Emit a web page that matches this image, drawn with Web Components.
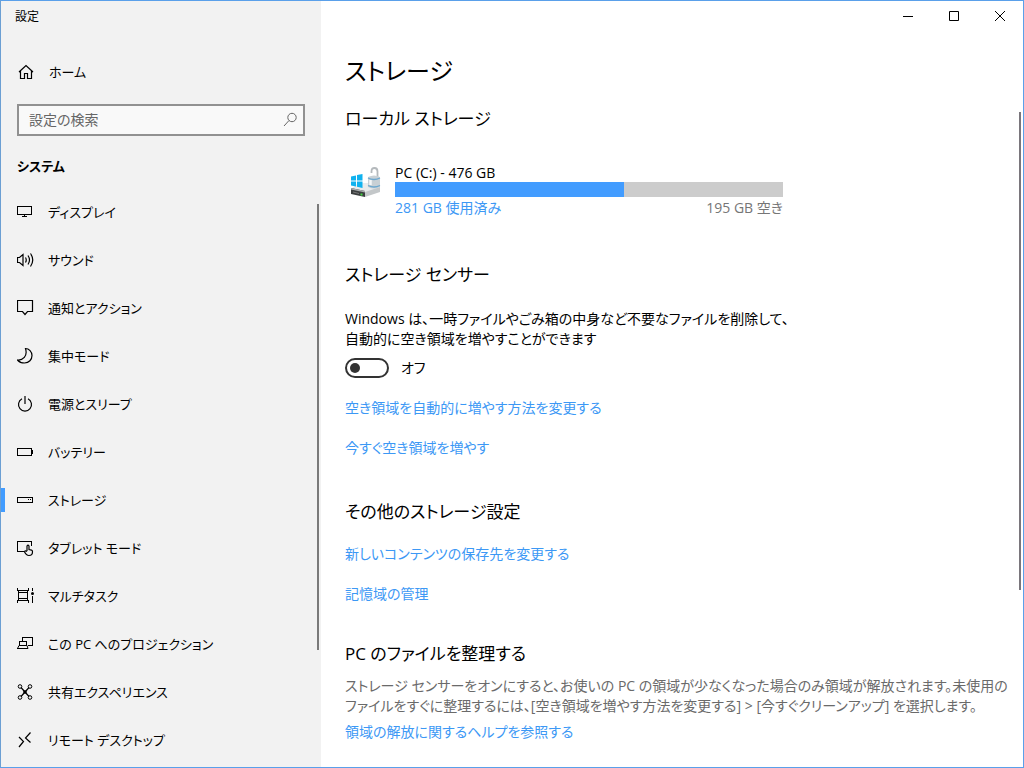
<!DOCTYPE html>
<html lang="ja">
<head>
<meta charset="utf-8">
<meta name="viewport" content="width=device-width, initial-scale=1">
<title>設定</title>
<style>
  :root {
    --accent: #429cff;
    --link: #3c98f5;
  }
  body {
    margin: 0;
    font: 14px/20px "Open Sans", "Noto Sans CJK JP", sans-serif;
    font-feature-settings: "palt";
    color: #000;
  }
</style>
</head>
<body>
<settings-window>
  <settings-sidebar slot="side" heading="システム">
    <nav-item icon="display">ディスプレイ</nav-item>
    <nav-item icon="sound">サウンド</nav-item>
    <nav-item icon="notify">通知とアクション</nav-item>
    <nav-item icon="moon">集中モード</nav-item>
    <nav-item icon="power">電源とスリープ</nav-item>
    <nav-item icon="battery">バッテリー</nav-item>
    <nav-item icon="storage" current>ストレージ</nav-item>
    <nav-item icon="tablet">タブレット モード</nav-item>
    <nav-item icon="multitask">マルチタスク</nav-item>
    <nav-item icon="project">この PC へのプロジェクション</nav-item>
    <nav-item icon="share">共有エクスペリエンス</nav-item>
    <nav-item icon="remote">リモート デスクトップ</nav-item>
  </settings-sidebar>
  <storage-page></storage-page>
</settings-window>

<script>
const icons = {
  home: '<path stroke-width="1.200" d="M2 9 9 2.500l7 6.500M3.500 8v7.500h4v-5h3v5h4V8"/>',
  display: '<path shape-rendering="crispEdges" d="M.5 3.500h14v8H.5zM7.500 12v2M5 13.500h5"/>',
  sound: '<path stroke-width="1.200" d="M.5 6.500h2l3.500-3v11l-3.500-3h-2zM8.500 6.500q1.500 2.500 0 5M11 4.500q3 4.500 0 9M13.500 2.500q4.500 6.500 0 13"/>',
  notify: '<path stroke-width="1.200" d="M.5 1.500h15v11h-5L8 15.500l-2.500-3h-5z"/>',
  moon: '<path stroke-width="1.200" d="M8.500 1.500c3.500 0 6.500 3.200 6.500 7 0 4-3 7.500-7.500 7.500-3 0-5.500-1.200-7-3 5 .5 10.500-3.500 8-11.500z"/>',
  power: '<path stroke-width="1.200" d="M8 1v8M5 3.800a6.500 6.500 0 1 0 6 0"/>',
  battery: '<path shape-rendering="crispEdges" d="M.5 5.500h14v7H.5zM15.500 7v4"/>',
  storage: '<path shape-rendering="crispEdges" d="M.5 6.500h15v5H.5zM11 8.500h1M13 8.500h1"/>',
  tablet: '<path shape-rendering="crispEdges" d="M7 12.500H.5v-10h14V7"/><path stroke-width="1.200" d="M10 12V7q1-1.600 2 0v3.500l2.500.7q1 .3 1 1.500c0 2.500-1 3.800-3.500 3.800-2 0-3.500-1.500-4.500-3.700.5-1.200 1.500-1 2.500-.3"/>',
  multitask: '<path shape-rendering="crispEdges" d="M.5 1v2.500h11V1M.5 16v-2.500h11V16M1.500 4v9M10.500 4v9M1 5.500h10M1 11.500h10M15.500 1v3M15.500 9v7"/><circle cx="15.500" cy="6.500" r="1.500" fill="currentColor" stroke="none"/>',
  project: '<path shape-rendering="crispEdges" d="M5.500 6V2.500h10v8H11M2.500 6.500h7v4h-7zM0 13.500h11"/><path d="M2 10.500.5 13.500M10 10.500l1 3"/>',
  share: '<path stroke-width="1.200" d="m4 4.500 8 9M12 4.500l-8 9"/><circle cx="3" cy="3.500" r="1.800"/><circle cx="13" cy="3.500" r="1.800"/><circle cx="3" cy="14.500" r="1.800"/><circle cx="13" cy="14.500" r="1.800"/><circle cx="8" cy="9" r="1.800" fill="currentColor" stroke="none"/>',
  remote: '<path stroke-width="1.200" d="m2 6 4.500 4.500L2 16M13.500 1.500 8.500 7l5 4.500"/>',
  search: '<path d="m2 15 5-5.500"/><circle cx="10" cy="6.500" r="4.200"/>'
};
const svg = name => `<svg width="18" height="18" viewBox="0 0 18 18" fill="none" stroke="currentColor" aria-hidden="true">${icons[name]}</svg>`;

function define(name, html) {
  const template = document.createElement('template');
  customElements.define(name, class extends HTMLElement {
    constructor() {
      super();
      template.innerHTML = typeof html === 'function' ? html(this) : html;
      this.attachShadow({ mode: 'open' }).append(template.content.cloneNode(true));
    }
  });
}

define('settings-window', `
  <style>
    :host { display: flex; box-sizing: border-box; height: 100vh; border: 1px solid #5aa0ea; border-left-color: #6b9fd3; background: #fff; overflow: hidden; }
    .side { flex: 0 0 320px; min-height: 0; background: #f2f2f2; }
    main { flex: 1; min-width: 0; display: flex; flex-direction: column; }
  </style>
  <div class="side"><slot name="side"></slot></div>
  <main><window-controls></window-controls><slot></slot></main>`);

define('window-controls', `
  <style>
    :host { display: flex; justify-content: flex-end; height: 30px; }
    button { width: 46px; padding: 0; border: 0; background: none; color: #000; display: grid; place-items: center; }
    svg { display: block; }
  </style>
  <button aria-label="最小化"><svg width="10" height="10" fill="none" stroke="currentColor"><path d="M0 5.500h10"/></svg></button>
  <button aria-label="最大化"><svg width="10" height="10" fill="none" stroke="currentColor"><path d="M.5.5h9v9h-9z"/></svg></button>
  <button aria-label="閉じる"><svg width="10" height="10" fill="none" stroke="currentColor"><path d="m0 0 10 10M10 0 0 10"/></svg></button>`);

define('settings-sidebar', el => `
  <style>
    :host { display: flex; flex-direction: column; height: 100%; }
    .title { padding-left: 14px; font-size: 12px; line-height: 32px; }
    .home { display: flex; align-items: center; gap: 14px; height: 48px; margin-top: 15px; padding-left: 16px; color: inherit; font-size: 13px; text-decoration: none; }
    .search { display: flex; align-items: center; box-sizing: border-box; height: 32px; margin: 8px 16px 0; padding: 0 3px 0 10px; border: 2px solid #919191; background: #f9f9f9; color: #666; }
    input { flex: 1; min-width: 0; border: 0; padding: 0; outline: 0; background: none; font: inherit; font-feature-settings: inherit; }
    input::placeholder { color: #666; opacity: 1; }
    h2 { margin: 8px 0 0; padding-left: 16px; font-size: 13px; line-height: 44px; font-weight: 700; }
    .list { display: flex; flex: 1; min-height: 0; overflow: hidden; }
    nav { flex: 1; }
    .thumb { width: 2px; height: 77%; margin: 16px 2px 0 0; background: #7a7a7a; }
  </style>
  <div class="title">設定</div>
  <a class="home" href="#home">${svg('home')}<span>ホーム</span></a>
  <label class="search"><input type="text" placeholder="設定の検索" aria-label="設定の検索">${svg('search')}</label>
  <h2>${el.getAttribute('heading')}</h2>
  <div class="list"><nav><slot></slot></nav><div class="thumb"></div></div>`);

define('nav-item', el => `
  <style>
    :host { display: block; }
    a { display: flex; align-items: center; gap: 13px; height: 48px; padding-left: 16px; color: #000; font-size: 13px; text-decoration: none; }
    svg { flex: none; }
    :host([current]) a { padding-left: 0; }
    :host([current]) a::before { content: ""; width: 4px; height: 24px; margin-right: -1px; background: var(--accent); }
  </style>
  <a href="#${el.getAttribute('icon')}"${el.hasAttribute('current') ? ' aria-current="page"' : ''}>${svg(el.getAttribute('icon'))}<span><slot></slot></span></a>`);

define('drive-usage', `
  <style>
    :host { display: flex; gap: 12px; max-width: 438px; }
    .drive { flex: none; margin-top: 1px; }
    .info { flex: 1; line-height: 18px; }
    label, progress { display: block; }
    progress { appearance: none; width: 100%; height: 15px; border: 0; background: #ccc; }
    progress::-webkit-progress-bar { background: #ccc; }
    progress::-webkit-progress-value { background: var(--accent); }
    .legend { display: flex; justify-content: space-between; line-height: 22px; color: #767676; }
    a { color: var(--link); text-decoration: none; }
  </style>
  <svg class="drive" width="38" height="36" viewBox="0 0 38 36" aria-hidden="true">
    <path d="m6 24 7-6h15l7 5-15 5z" fill="#e9ebec"/>
    <path d="m20 27 15-5v5l-15 5z" fill="#c3c7c9"/>
    <path d="m6 23 14 3v6L6 29z" fill="#3b3e3f"/>
    <path d="m6 23 14 3v1.500L6 24.500z" fill="#a9adaf"/>
    <path d="m8 27 6 1.500" stroke="#777"/><path d="M15.500 29.500h2" stroke="#42d742" stroke-width="2"/>
    <path d="m6 11.500 5-1v5H6zM12 10l5.500-1v6.500H12zM6 16.500h5v5l-5-1zM12 16.500h5.500V23L12 21.800z" fill="#10b2ef"/>
    <path d="M26.500 8V6.500q0-3.500 3-3.500t3 3.500V12" fill="none" stroke="#b4b9bc" stroke-width="1.800"/>
    <path d="M23 12q6-3 12 0v10q-6 3-12 0z" fill="#c8d0d5"/>
    <path d="M23 13q6 3 12 0M23 20.500q6 3 12 0" fill="none" stroke="#6da8cf" stroke-width="1.300"/>
    <path d="M25.500 15v5" stroke="#f5f7f8" stroke-width="2.500"/>
  </svg>
  <div class="info">
    <label for="use">PC (C:) - 476 GB</label>
    <progress id="use" value="59" max="100"></progress>
    <div class="legend"><a href="#used">281 GB 使用済み</a><span>195 GB 空き</span></div>
  </div>`);

define('toggle-switch', `
  <style>
    :host { display: block; }
    label { display: flex; align-items: center; gap: 12px; height: 20px; }
    input { appearance: none; display: flex; align-items: center; box-sizing: border-box; width: 44px; height: 20px; margin: 0; padding-left: 3px; border: 2px solid #333; border-radius: 10px; }
    input::before { content: ""; width: 10px; height: 10px; border-radius: 50%; background: #333; }
  </style>
  <label><input type="checkbox" role="switch"><span><slot></slot></span></label>`);

define('storage-page', `
  <style>
    :host { flex: 1; min-height: 0; display: flex; overflow: hidden; }
    .content { flex: 1; min-width: 0; padding: 20px 0 0 24px; }
    .thumb { width: 2px; height: 65%; margin: 81px 2px 0 0; background: #7a767c; }
    h1 { margin: 0; font-size: 24px; line-height: 40px; font-weight: 400; }
    h2 { margin: 0; font-size: 17px; line-height: 28px; font-weight: 400; }
    h1 + h2 { margin-top: 14px; }
    section { padding-top: 36px; }
    drive-usage { margin-top: 31px; }
    drive-usage + section { padding-top: 42px; }
    p { margin: 20px 0 0; }
    .note { margin-top: 8px; color: #6a6a6a; }
    toggle-switch { margin-top: 9px; }
    a { display: block; width: fit-content; margin-top: 20px; color: var(--link); text-decoration: none; }
    h2 + a { margin-top: 18px; }
    .more { padding-top: 40px; }
    .note + a { margin-top: 6px; }
  </style>
  <div class="content">
    <h1>ストレージ</h1>
    <h2>ローカル ストレージ</h2>
    <drive-usage></drive-usage>
    <section>
      <h2>ストレージ センサー</h2>
      <p>Windows は、一時ファイルやごみ箱の中身など不要なファイルを削除して、<br>自動的に空き領域を増やすことができます</p>
      <toggle-switch>オフ</toggle-switch>
      <a href="#change">空き領域を自動的に増やす方法を変更する</a>
      <a href="#free">今すぐ空き領域を増やす</a>
    </section>
    <section class="more">
      <h2>その他のストレージ設定</h2>
      <a href="#location">新しいコンテンツの保存先を変更する</a>
      <a href="#spaces">記憶域の管理</a>
    </section>
    <section>
      <h2>PC のファイルを整理する</h2>
      <p class="note">ストレージ センサーをオンにすると、お使いの PC の領域が少なくなった場合のみ領域が解放されます。未使用の<br>ファイルをすぐに整理するには、[空き領域を増やす方法を変更する] &gt; [今すぐクリーンアップ] を選択します。</p>
      <a href="#help">領域の解放に関するヘルプを参照する</a>
    </section>
  </div>
  <div class="thumb"></div>`);
</script>
</body>
</html>
